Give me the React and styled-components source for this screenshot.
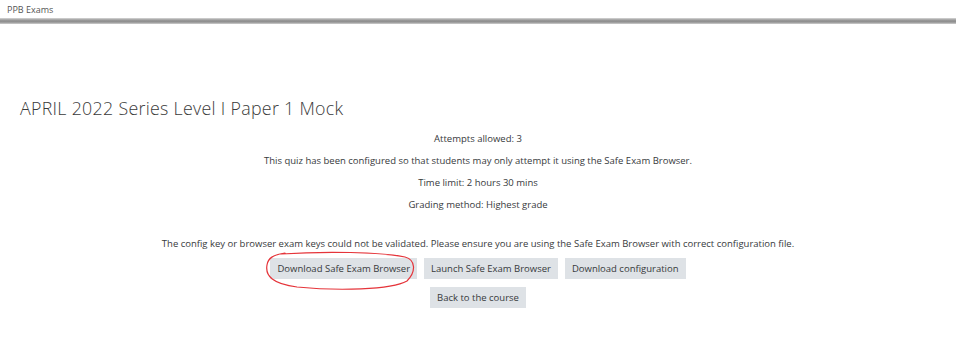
import React from 'react';
import styled, { createGlobalStyle } from 'styled-components';

const GlobalStyle = createGlobalStyle`
  body {
    margin: 0;
    background: #fff;
    font-family: "Open Sans", "Noto Sans", sans-serif;
    color: #373a3c;
  }
`;

const TopBar = styled.header`
  height: 18px;
  display: flex;
  align-items: center;
  padding-left: 7px;
  font-size: 9px;
  color: #555;
`;

const Rule = styled.div`
  height: 6px;
  background: linear-gradient(#d8d8d8, #999 35%, #8e8e8e 65%, #cfcfcf);
`;

const Main = styled.main`
  padding: 72px 20px 0;
`;

const Title = styled.h2`
  margin: 0 0 12px;
  font-size: 17.8px;
  font-weight: 300;
  letter-spacing: 0.3px;
  color: #3a3a3a;
`;

const Info = styled.div`
  display: flex;
  flex-direction: column;
  align-items: center;
  gap: 9px;
  font-size: 9.5px;
  line-height: 13px;
`;

const Notice = styled.p`
  margin: 26px 0 8px;
  text-align: center;
  font-size: 9.5px;
  line-height: 13px;
`;

const ButtonRow = styled.div`
  display: flex;
  justify-content: center;
  gap: 7px;
  margin-bottom: ${({ $last }) => ($last ? 0 : '8px')};
`;

const Button = styled.button`
  height: 21px;
  padding: 0 7px;
  border: none;
  background: #dee2e6;
  font-family: inherit;
  font-size: 9.5px;
  color: #373a3c;
`;

const Circled = styled.span`
  position: relative;
  display: inline-flex;
`;

const Scribble = styled.svg`
  position: absolute;
  left: -5px;
  top: -6px;
  overflow: visible;
  pointer-events: none;
`;

const App = () => (
  <>
    <GlobalStyle />
    <TopBar>PPB Exams</TopBar>
    <Rule />
    <Main>
      <Title>APRIL 2022 Series Level I Paper 1 Mock</Title>
      <Info>
        <span>Attempts allowed: 3</span>
        <span>This quiz has been configured so that students may only attempt it using the Safe Exam Browser.</span>
        <span>Time limit: 2 hours 30 mins</span>
        <span>Grading method: Highest grade</span>
      </Info>
      <Notice>
        The config key or browser exam keys could not be validated. Please ensure you are using the Safe Exam Browser with correct configuration file.
      </Notice>
      <ButtonRow>
        <Circled>
          <Button>Download Safe Exam Browser</Button>
          <Scribble width="154" height="40" viewBox="0 0 154 40">
            <path
              d="M16 2 C 60 -1, 116 0, 140 5 C 151 8, 151 20, 142 29 C 126 38, 72 39, 32 35 C 8 32, 0 24, 2 13 C 3 6, 8 3, 20 1"
              fill="none"
              stroke="#e5343a"
              strokeWidth="1.2"
              strokeLinecap="round"
            />
          </Scribble>
        </Circled>
        <Button>Launch Safe Exam Browser</Button>
        <Button>Download configuration</Button>
      </ButtonRow>
      <ButtonRow $last>
        <Button>Back to the course</Button>
      </ButtonRow>
    </Main>
  </>
);

export default App;
